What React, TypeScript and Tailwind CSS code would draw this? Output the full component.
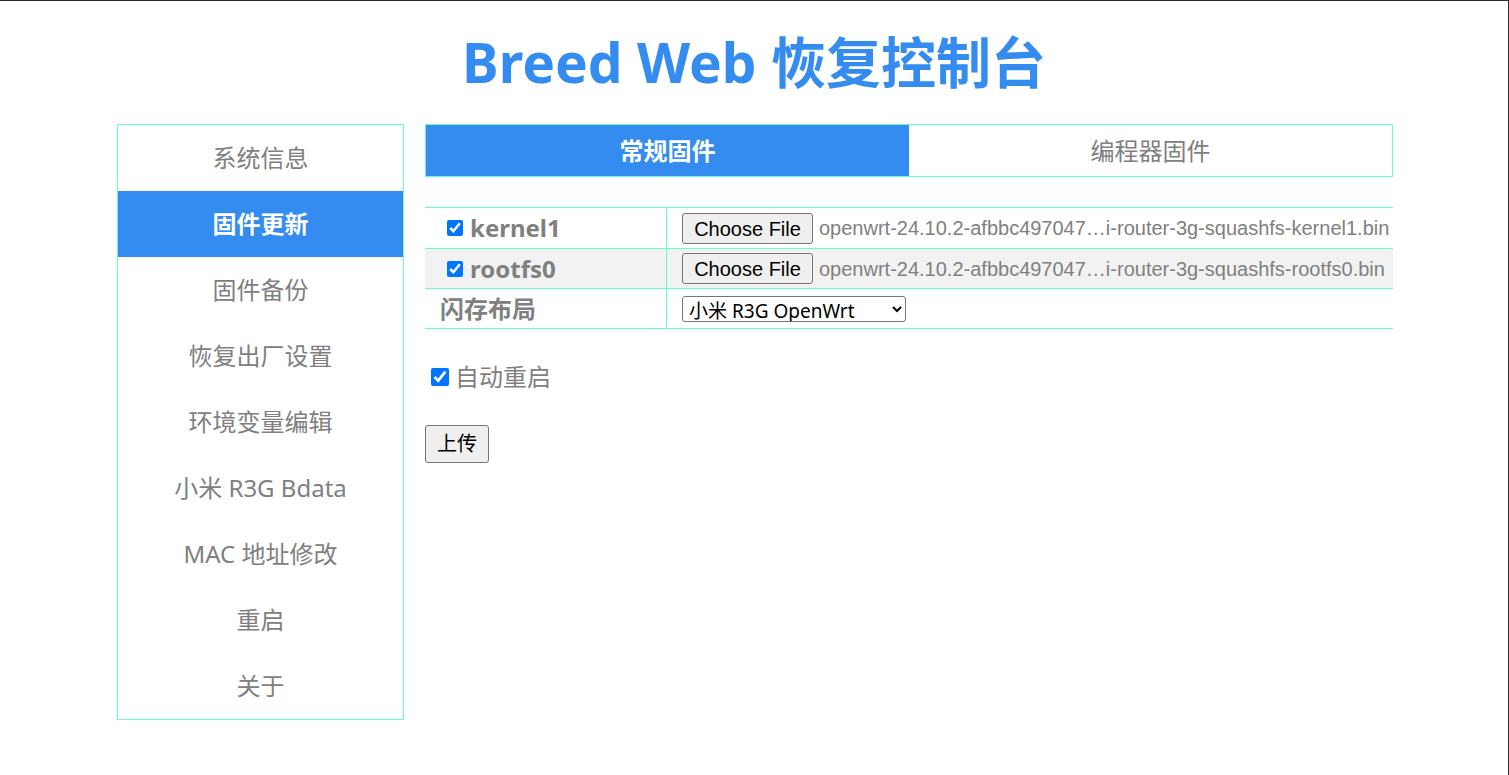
import { useState } from "react";

const navItems = [
  "系统信息",
  "固件更新",
  "固件备份",
  "恢复出厂设置",
  "环境变量编辑",
  "小米 R3G Bdata",
  "MAC 地址修改",
  "重启",
  "关于",
];

const files = [
  {
    name: "kernel1",
    file: "openwrt-24.10.2-afbbc497047…i-router-3g-squashfs-kernel1.bin",
  },
  {
    name: "rootfs0",
    file: "openwrt-24.10.2-afbbc497047…i-router-3g-squashfs-rootfs0.bin",
  },
];

function FakeFileInput({ fileName }: { fileName: string }) {
  return (
    <div className="flex items-center gap-[6px] font-['Liberation_Sans',Arial,sans-serif] text-[20px]">
      <button
        type="button"
        className="h-[31px] w-[131px] rounded-[3px] border border-[#767676] bg-[#efefef] text-black"
      >
        Choose File
      </button>
      <span className="whitespace-nowrap text-[#808080]">{fileName}</span>
    </div>
  );
}

export default function App() {
  const [active, setActive] = useState(1);
  const [tab, setTab] = useState(0);

  return (
    <div className="min-h-[775px] border-t border-r border-[#2b2b2b] bg-white font-['Noto_Sans','Noto_Sans_CJK_SC',sans-serif] text-[#808080]">
      <h1 className="flex h-[123px] items-center justify-center text-[55px] font-bold text-[#358cf0]">
        Breed Web 恢复控制台
      </h1>

      <div className="ml-[117px] flex w-[1276px] items-start gap-[21px]">
        {/* sidebar */}
        <nav className="w-[287px] border border-[#66ffcc]">
          {navItems.map((label, i) => (
            <button
              key={label}
              type="button"
              onClick={() => setActive(i)}
              className={
                i === active
                  ? "flex h-[66px] w-full items-center justify-center bg-[#358cf0] text-[24px] font-bold text-white"
                  : "flex h-[66px] w-full items-center justify-center text-[24px] text-[#808080]"
              }
            >
              {label}
            </button>
          ))}
        </nav>

        {/* main */}
        <main className="w-[968px]">
          <div className="flex h-[53px] border border-[#66ffcc]">
            {["常规固件", "编程器固件"].map((label, i) => (
              <button
                key={label}
                type="button"
                onClick={() => setTab(i)}
                className={
                  i === tab
                    ? "flex flex-1 items-center justify-center bg-[#358cf0] text-[24px] font-bold text-white"
                    : "flex flex-1 items-center justify-center text-[24px] text-[#808080]"
                }
              >
                {label}
              </button>
            ))}
          </div>

          <div className="mt-[30px] border-t border-t-[#66ffcc]">
            {files.map((f, i) => (
              <div
                key={f.name}
                className={
                  i === 1
                    ? "flex h-[40px] border-b border-b-[#66ffcc] bg-[#f2f2f2]"
                    : "flex h-[41px] border-b border-b-[#66ffcc]"
                }
              >
                <label className="flex w-[242px] items-center border-r border-r-[#66ffcc] pl-[22px] text-[24px] font-bold">
                  <input
                    type="checkbox"
                    defaultChecked
                    className="mr-[7px] h-4 w-4 accent-[#0075ff]"
                  />
                  {f.name}
                </label>
                <div className="flex flex-1 items-center pl-[15px]">
                  <FakeFileInput fileName={f.file} />
                </div>
              </div>
            ))}
            <div className="flex h-[40px] border-b border-b-[#66ffcc]">
              <div className="flex w-[242px] items-center border-r border-r-[#66ffcc] pl-[15px] text-[24px] font-bold">
                闪存布局
              </div>
              <div className="flex flex-1 items-center pl-[15px]">
                <select className="h-[26px] w-[224px] rounded-[3px] border border-[#767676] bg-white px-[2px] py-0 text-[19px] text-black">
                  <option>小米 R3G OpenWrt</option>
                  <option>小米 R3G 官方</option>
                </select>
              </div>
            </div>
          </div>

          <label className="mt-[33px] flex h-[30px] items-center pl-[6px] text-[24px]">
            <input
              type="checkbox"
              defaultChecked
              className="mr-[6px] h-[18px] w-[18px] accent-[#0075ff]"
            />
            自动重启
          </label>

          <button
            type="button"
            className="mt-[33px] h-[38px] w-[64px] rounded-[3px] border border-[#767676] bg-[#efefef] text-[20px] text-black"
          >
            上传
          </button>
        </main>
      </div>
    </div>
  );
}
